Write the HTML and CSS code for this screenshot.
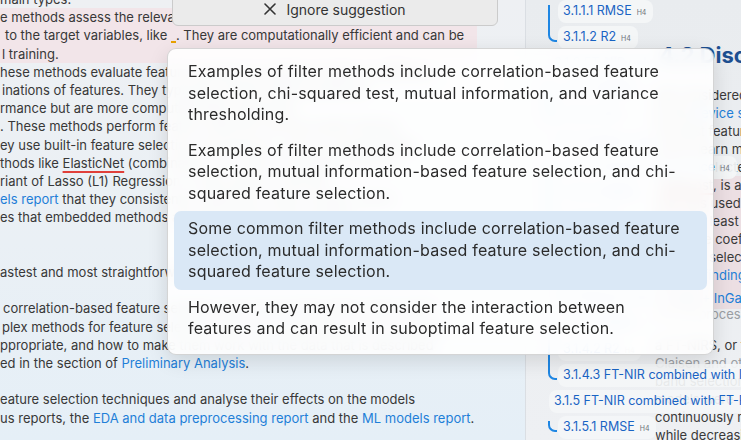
FILE: index.html
```html
<!DOCTYPE html>
<html lang="en">
<head>
<meta charset="utf-8">
<title>Feature selection</title>
<link rel="stylesheet" href="styles.css">
</head>
<body>
<div class="app">
  <main class="main">
    <div class="doc">
      <div class="ln">main types.</div>
      <div class="hl">
        <div class="ln">e methods assess the relevance of each feature independently by relating</div>
        <div class="ln in5">to the target variables, like <span class="mark"></span>. They are computationally efficient and can be</div>
        <div class="ln in2">l training.</div>
      </div>
      <div class="ln">hese methods evaluate feature subsets by training models on different</div>
      <div class="ln in2">inations of features. They typically achieve better predictive</div>
      <div class="ln">rmance but are more computationally expensive.</div>
      <div class="ln">. These methods perform feature selection during model training.</div>
      <div class="ln">ey use built-in feature selection mechanisms, such as regularisation</div>
      <div class="ln">thods like <span class="err">ElasticNet</span> (combination of L1 and L2 penalties) and the</div>
      <div class="ln">riant of Lasso (L1) Regression. It was shown in the ML</div>
      <div class="ln"><span class="link">els report</span> that they consistently outperform other models, which</div>
      <div class="ln">es that embedded methods are well suited to this problem.</div>
      <p class="para gap2"><span class="ln">astest and most straightforward approach, filter methods were chosen.</span></p>
      <p class="para">
        <span class="ln in3">correlation-based feature selection and mutual information were used.</span>
        <span class="ln in2">plex methods for feature selection were not considered, as it is not clear</span>
        <span class="ln">ppropriate, and how to make them work with the data that is described</span>
        <span class="ln">ed in the section of <span class="link">Preliminary Analysis</span>.</span>
      </p>
      <p class="para">
        <span class="ln">eature selection techniques and analyse their effects on the models</span>
        <span class="ln">us reports, the <span class="link">EDA and data preprocessing report</span> and the <span class="link">ML models report</span>.</span>
      </p>
    </div>
  </main>

  <aside class="side">
    <div class="rdoc">
      <h2 class="rhead">4.2 Discussion</h2>
      <div class="rl">We considered the results of all models across</div>
      <div class="rl">In the <span class="link">device selection</span> step</div>
      <div class="rl">the best feature subsets were</div>
      <div class="rl">and to learn more effectively</div>
      <div class="rl">further selected, the regression</div>
      <div class="rhl">
        <div class="rl">(<span class="err">XGBoost</span>, is a gradient</div>
        <div class="rl">that was used to</div>
        <div class="rl">found at least Area</div>
        <div class="rl">using the coefficients</div>
        <div class="rl">features selected</div>
        <div class="rl">the <span class="link">key findings:</span></div>
        <div class="rl rsp"><span class="link">FT-NIR + InGaAs</span></div>
      </div>
      <div class="rl fade pre">the preprocessing</div>
      <div class="rl rgap">a FT-NIRS, or the Raman</div>
      <div class="rl fade">Claisen and others</div>
      <div class="rl">band selection for</div>
      <div class="rl">models were</div>
      <div class="rl">continuously monitoring the</div>
      <div class="rl">while decreasing the</div>
    </div>

    <nav class="toc">
      <div class="grp">
        <a class="pill">3.1.1.1 RMSE<small>H4</small></a>
        <a class="pill">3.1.1.2 R2<small>H4</small></a>
      </div>
      <a class="pill">3.1.2 FT-NIR only</a>
      <div class="grp">
        <a class="pill">3.1.2.1 RMSE<small>H4</small></a>
        <a class="pill">3.1.2.2 R2<small>H4</small></a>
      </div>
      <a class="pill">3.1.3 InGaAs only</a>
      <div class="grp">
        <a class="pill">3.1.3.1 Feature importance<small>H4</small></a>
        <a class="pill">3.1.3.2 RMSE<small>H4</small></a>
        <a class="pill">3.1.3.3 R2<small>H4</small></a>
        <a class="pill">3.1.3.4 Bands<small>H4</small></a>
        <a class="pill">3.1.3.5 Notes<small>H4</small></a>
      </div>
      <a class="pill">3.1.4 Raman only</a>
      <div class="grp">
        <a class="pill">3.1.4.1 RMSE<small>H4</small></a>
        <a class="pill">3.1.4.2 R2<small>H4</small></a>
        <a class="pill">3.1.4.3 FT-NIR combined with InGaAs and Raman</a>
      </div>
      <a class="pill">3.1.5 FT-NIR combined with FT-Raman and InGaAs</a>
      <div class="grp">
        <a class="pill">3.1.5.1 RMSE<small>H4</small></a>
      </div>
    </nav>
  </aside>
</div>

<div class="ignore">
  <svg class="x" width="12" height="12" viewBox="0 0 12 12" aria-hidden="true"><path d="M1 1 L11 11 M11 1 L1 11" stroke="#333" stroke-width="1.6" stroke-linecap="round" fill="none"/></svg>
  <span>Ignore suggestion</span>
</div>

<div class="popup">
  <div class="opt">Examples of filter methods include correlation-based feature selection, chi-squared test, mutual information, and variance thresholding.</div>
  <div class="opt">Examples of filter methods include correlation-based feature selection, mutual information-based feature selection, and chi-squared feature selection.</div>
  <div class="opt active">Some common filter methods include correlation-based feature selection, mutual information-based feature selection, and chi-squared feature selection.</div>
  <div class="opt">However, they may not consider the interaction between features and can result in suboptimal feature selection.</div>
</div>
</body>
</html>
```

FILE: styles.css
```css
html, body {
  margin: 0;
  padding: 0;
}
body {
  width: 741px;
  height: 440px;
  overflow: hidden;
  position: relative;
  font-family: Inter, "Noto Sans", "Liberation Sans", sans-serif;
  background: #eceff2;
}

.app {
  display: flex;
  height: 440px;
}

/* ---------- main document ---------- */
.main {
  width: 525px;
  flex: none;
  overflow: hidden;
  background: linear-gradient(#eef0f3 0%, #eaf0f5 55%, #e5eff7 100%);
  border-right: 1px solid #dadee3;
}
.doc {
  width: 477px;
  margin-top: -10px;
  font-size: 13px;
  line-height: 18.2px;
  color: #383838;
}
.ln {
  display: block;
  white-space: nowrap;
}
.in2 { padding-left: 2px; }
.in3 { padding-left: 3px; }
.in5 { padding-left: 5px; }
.hl {
  background: #f2e5e9;
}
.para {
  margin: 18.2px 0 0;
}
.gap2 {
  margin-top: 36.4px;
}
.link {
  color: #1f7fd8;
}
.err {
  text-decoration: underline;
  text-decoration-color: #e0403a;
  text-decoration-thickness: 2px;
  text-underline-offset: 3px;
}
.mark {
  display: inline-block;
  width: 5px;
  height: 2px;
  background: #e8a200;
  vertical-align: -3px;
}

/* ---------- right side ---------- */
.side {
  flex: 1;
  min-width: 0;
  display: grid;
  overflow: hidden;
  background: linear-gradient(#e9ecef, #eef0f3);
}
.rdoc, .toc {
  grid-area: 1 / 1;
  min-width: 0;
}
.rdoc {
  padding: 40px 0 0 129px;
  font-size: 13px;
  line-height: 18px;
  color: #3a3a3a;
  white-space: nowrap;
}
.rhead {
  margin: 0 0 16px 4px;
  font-size: 22px;
  line-height: 30px;
  font-weight: 700;
  color: #1d4f91;
}
.rl {
  display: block;
}
.rhl {
  background: #ecdfe3;
  padding-bottom: 2px;
}
.rsp {
  margin-top: 5px;
}
.pre {
  margin-top: -4px;
}
.rgap {
  margin-top: 13px;
}
.fade {
  color: #9a9ea3;
}

.toc {
  display: flex;
  flex-direction: column;
  align-items: flex-start;
  gap: 3px;
  padding: 0 0 0 23px;
  white-space: nowrap;
}
.grp {
  position: relative;
  display: flex;
  flex-direction: column;
  align-items: flex-start;
  gap: 3px;
  padding-left: 9px;
}
.grp::before {
  content: "";
  position: absolute;
  left: -1px;
  top: 5px;
  bottom: 7px;
  width: 7px;
  border-left: 2px solid #1e86e3;
  border-bottom: 2px solid #1e86e3;
  border-bottom-left-radius: 7px;
}
.pill {
  display: flex;
  align-items: baseline;
  height: 23px;
  line-height: 22px;
  box-sizing: border-box;
  padding: 0 7px 0 5px;
  border-radius: 8px;
  background: rgba(244, 246, 248, 0.93);
  color: #1a64c4;
  font-size: 12.5px;
  text-decoration: none;
}
.pill small {
  font-size: 7px;
  color: #6d7277;
  margin-left: 5px;
}

/* ---------- overlays ---------- */
.ignore {
  position: absolute;
  left: 172px;
  top: -8px;
  width: 326px;
  height: 34px;
  box-sizing: border-box;
  display: flex;
  align-items: center;
  justify-content: center;
  gap: 10px;
  background: #ebebeb;
  border: 1px solid #cbcbcb;
  border-radius: 6px;
  font-size: 14px;
  color: #333;
}
.x {
  flex: none;
}

.popup {
  position: absolute;
  left: 167px;
  top: 48px;
  width: 547px;
  box-sizing: border-box;
  padding: 5px 6px 7px;
  background: rgba(255, 255, 255, 0.9);
  -webkit-backdrop-filter: blur(8px);
  backdrop-filter: blur(8px);
  border: 1px solid rgba(0, 0, 0, 0.16);
  border-radius: 9px;
  box-shadow: 0 6px 20px rgba(0, 0, 0, 0.12);
}
.opt {
  padding: 7px 21px 7px 14px;
  font-size: 16px;
  letter-spacing: 0.2px;
  line-height: 21.5px;
  color: #2b2b2b;
  border-radius: 7px;
}
.opt.active {
  background: #dae8f6;
}
```
